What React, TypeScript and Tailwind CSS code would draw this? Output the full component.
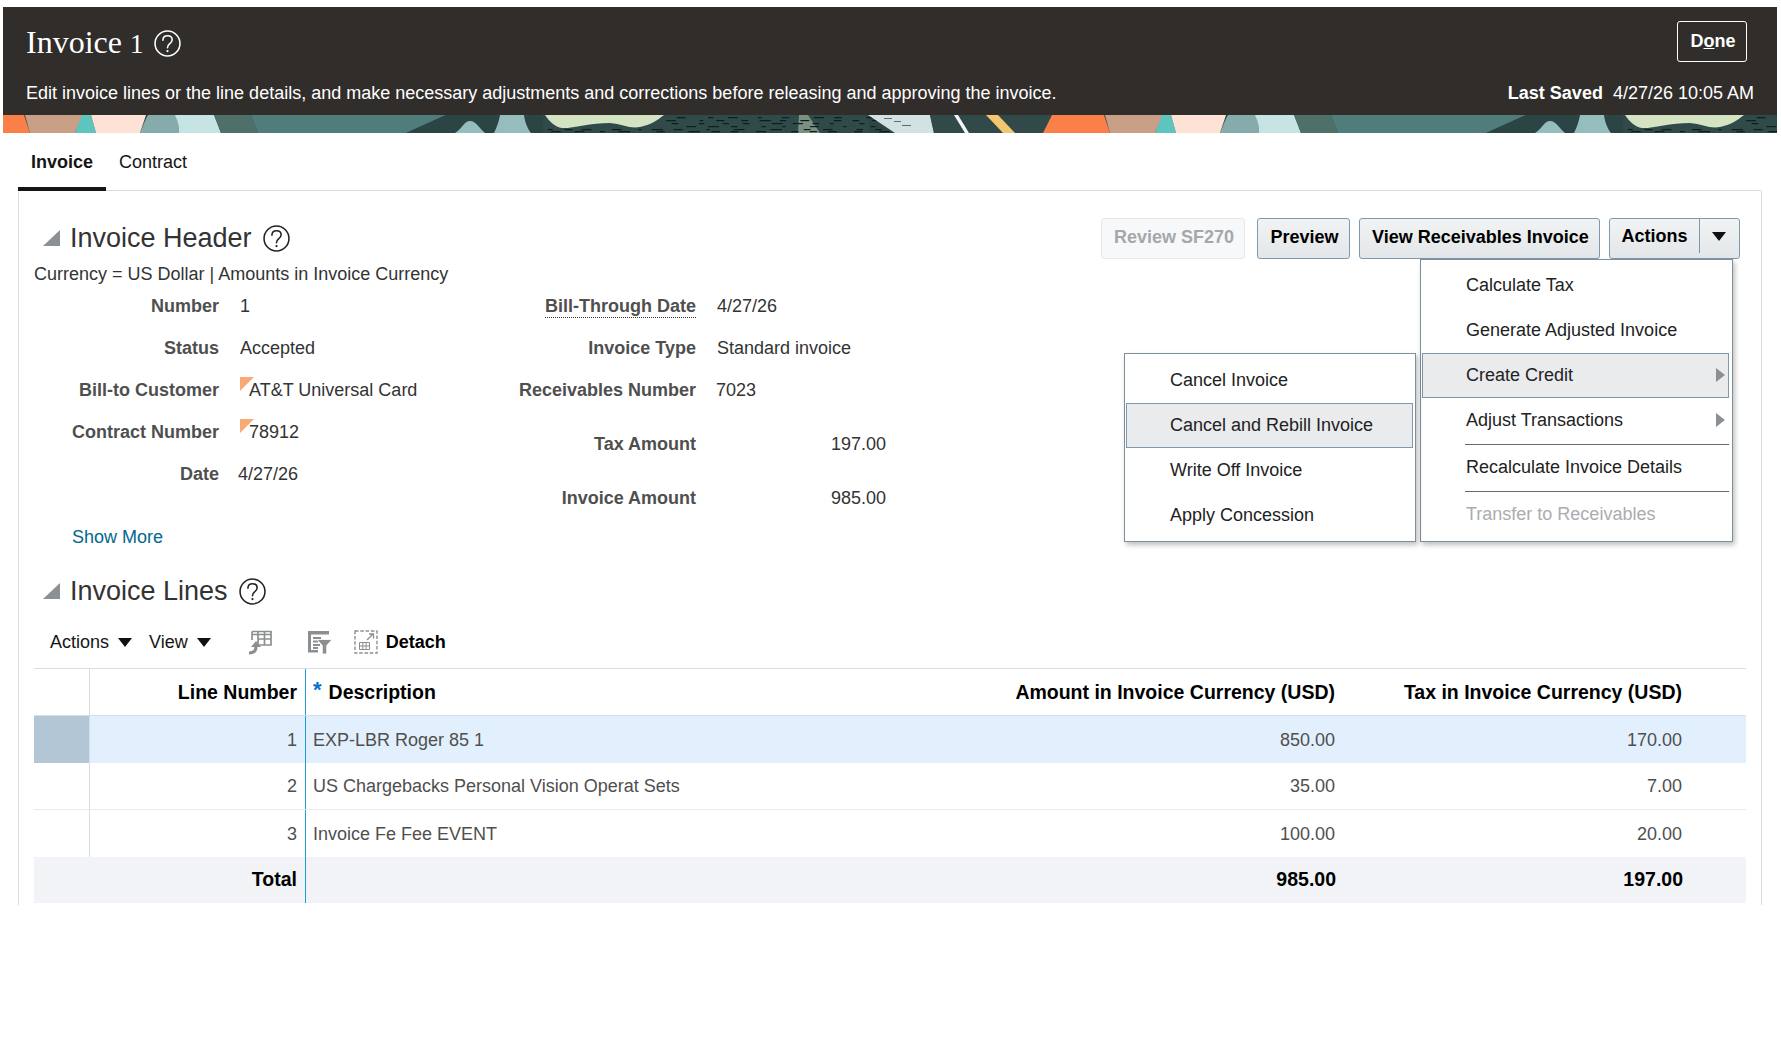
import React from "react";

const PERIOD = 1080;

function dashes() {
  const out: { x: number; y: number; w: number }[] = [];
  let s = 7;
  const rnd = () => {
    s = (s * 16807) % 2147483647;
    return s / 2147483647;
  };
  [2, 5, 8, 11, 14, 16].forEach((y) => {
    let x = 545 + rnd() * 10;
    while (x < 925) {
      const w = 3 + rnd() * 9;
      const minY = x < 665 ? 12 : 0;
      if (y >= minY) out.push({ x, y, w });
      x += w + 8 + rnd() * 18;
    }
  });
  return out;
}

function BannerTile({ x, marks }: { x: number; marks: { x: number; y: number; w: number }[] }) {
  return (
    <g transform={`translate(${x} 0)`}>
      <polygon points="-28,0 24,0 30,18 -37,18" fill="#fb7f48" />
      <polygon points="25,0 83,0 75,18 30,18" fill="#c99f86" />
      <polygon points="82,0 91,0 96,18 75,18" fill="#5ec4be" />
      <polygon points="91,0 146,0 140,18 96,18" fill="#fee2d6" />
      <path d="M140 18 C144 8 146 3 148 0 L176 0 C178 6 179 12 179 18 Z" fill="#85acab" />
      <path d="M179 18 C179 12 178 6 175 0 L214 0 L221 18 Z" fill="#c7e4e5" />
      <polygon points="214,0 251,0 258,18 221,18" fill="#4f7069" />
      <polygon points="251,0 446,0 406,18 258,18" fill="#507d7c" />
      <polygon points="446,0 545,0 545,18 406,18" fill="#2b4544" />
      <path d="M455 18 C462 14 464 6 470 6 C476 6 480 14 485 18 Z" fill="#95bdbd" />
      <path d="M500 0 L524 0 C525 8 528 14 531 18 L494 18 C497 12 499 6 500 0 Z" fill="#95bdbd" />
      <rect x="543" y="0" width="326" height="18" fill="#2f4a48" />
      <path d="M545 0 L664 0 C658 5 650 10 640 12 C630 14 622 9 610 8 C590 8 570 14 562 13 C555 12 549 6 545 0 Z" fill="#d4e3c2" />
      <polygon points="799,0 808,0 820,18 798,18" fill="#7c9081" />
      {marks.map((m, i) => (
        <rect key={i} x={m.x} y={m.y} width={m.w} height="1.2" fill="#0f1d1c" />
      ))}
      <polygon points="868,0 930,0 934,18 895,18" fill="#d2e2e3" />
      <rect x="884" y="3" width="8" height="1" fill="#5a6e6e" />
      <rect x="894" y="6" width="7" height="1" fill="#5a6e6e" />
      <rect x="902" y="10" width="9" height="1" fill="#5a6e6e" />
      <polygon points="930,0 1052,0 1043,18 934,18" fill="#314a49" />
      <polygon points="954,0 958,0 969,18 965,18" fill="#f4f7f6" />
      <polygon points="986,0 998,0 1015,18 1003,18" fill="#f3c770" />
    </g>
  );
}

function Banner() {
  const marks = dashes();
  return (
    <svg className="block h-[18px] w-full" viewBox="0 0 1774 18" preserveAspectRatio="none">
      <rect x="0" y="0" width="1774" height="18" fill="#2b4544" />
      <BannerTile x={-3} marks={marks} />
      <BannerTile x={PERIOD - 3} marks={marks} />
    </svg>
  );
}

function HelpIcon({ size, color, className }: { size: number; color: string; className?: string }) {
  return (
    <svg width={size} height={size} viewBox="0 0 26 26" fill="none" className={className}>
      <circle cx="13" cy="13" r="12" stroke={color} strokeWidth="1.5" />
      <path d="M8.600 9.800 C8.600 7 10.500 5.500 13 5.500 C15.700 5.500 17.500 7.200 17.500 9.500 C17.500 11.500 16.300 12.400 15 13.400 C13.700 14.400 13 15.200 13 17" stroke={color} strokeWidth="1.5" strokeLinecap="round" />
      <circle cx="13" cy="20.300" r="1.100" fill={color} />
    </svg>
  );
}

function SectionTitle({ title }: { title: string }) {
  return (
    <div className="flex h-[40px] items-center">
      <span className="ml-[9px] h-0 w-0 border-b-[16px] border-l-[17px] border-b-[#8b9094] border-l-transparent" />
      <h2 className="ml-[10px] text-[27px] font-normal text-[#333333]">{title}</h2>
      <HelpIcon size={27} color="#222222" className="ml-[11px]" />
    </div>
  );
}

function Flag() {
  return (
    <span className="absolute left-0 top-[-1px] h-0 w-0 border-r-[14px] border-t-[14px] border-r-transparent border-t-[#fba974]" />
  );
}

function Col1Row({ label, children }: { label: string; children: React.ReactNode }) {
  return (
    <div className="flex h-[42px] items-center">
      <div className="w-[185px] text-right font-bold text-[#4f4f4f]">{label}</div>
      <div className="ml-[21px] text-[#333333]">{children}</div>
    </div>
  );
}

function Col2Row({ label, right, h, dotted, children }: { label: string; right?: boolean; h: string; dotted?: boolean; children: React.ReactNode }) {
  return (
    <div className={`flex items-center ${h}`}>
      <div className="w-[246px] text-right font-bold text-[#4f4f4f]">
        <span className={dotted ? "border-b border-dotted border-[#333333] pb-[1px]" : ""}>{label}</span>
      </div>
      <div className={`ml-[21px] w-[169px] text-[#333333] ${right ? "text-right" : ""}`}>{children}</div>
    </div>
  );
}

function Btn({ children, wide, disabled }: { children: React.ReactNode; wide: string; disabled?: boolean }) {
  return (
    <button
      className={
        disabled
          ? `h-[41px] rounded-[3px] border border-[#e4e8ea] bg-[#f7f8f9] pb-[4px] pl-[2px] text-center font-bold text-[#a4a8ab] ${wide}`
          : `h-[41px] rounded-[3px] border border-[#7e98ad] bg-gradient-to-b from-[#f1f3f3] to-[#e3e7e9] pb-[4px] pl-[2px] text-center font-bold text-black ${wide}`
      }
    >
      {children}
    </button>
  );
}

function MenuItem({ label, h, active, arrow, muted }: { label: string; h: string; active?: boolean; arrow?: boolean; muted?: boolean }) {
  return (
    <div
      className={`relative flex items-center pl-[43px] ${h} ${active ? "border border-[#7e98ad] bg-[#e9ebed]" : "border border-transparent"} ${muted ? "text-[#a9adb0]" : "text-[#222222]"}`}
    >
      {label}
      {arrow && (
        <span className="absolute right-[3px] h-0 w-0 border-y-[7px] border-l-[9px] border-y-transparent border-l-[#8b9094]" />
      )}
    </div>
  );
}

function Caret() {
  return <span className="h-0 w-0 border-x-[7px] border-t-[9px] border-x-transparent border-t-[#111111]" />;
}

function FreezeIcon() {
  return (
    <svg width="24" height="25" viewBox="0 0 24 25" fill="none">
      <path d="M4 1.500H23V15H10M4 1.500V10M4 4.500H23M10 9H23M10 1.500V15M16.500 1.500V15" stroke="#8c8f91" strokeWidth="1.7" />
      <path d="M1 23C6 23 8 21 8 16" stroke="#8c8f91" strokeWidth="3.200" />
      <path d="M3 17L8 11L13 17Z" fill="#8c8f91" />
    </svg>
  );
}

function FilterIcon() {
  return (
    <svg width="25" height="25" viewBox="0 0 25 25" fill="none">
      <path d="M1 1h21v3.500H1zM1 4.500h3V22H1zM1 20h10v2.500H1z" fill="#8c8f91" />
      <path d="M6 8h8M6 11.500h5M6 15h7M6 18h5" stroke="#8c8f91" strokeWidth="2" />
      <path d="M10 9.500h15l-5.300 6v8.500h-4.400v-8.500z" fill="#8c8f91" stroke="#ffffff" strokeWidth="0.800" />
    </svg>
  );
}

function DetachIcon() {
  return (
    <svg width="24" height="24" viewBox="0 0 24 24" fill="none">
      <rect x="1" y="1" width="22" height="22" stroke="#8c8f91" strokeWidth="1.400" strokeDasharray="3.500 1.800" />
      <path d="M5.500 12.500h10v7h-10zM5.500 16h10M8.800 12.500v7M12.100 12.500v7" stroke="#8c8f91" strokeWidth="1" />
      <path d="M13 10l6-6M15 4h4.500v4.500" stroke="#8c8f91" strokeWidth="1.300" />
    </svg>
  );
}

const gridCols = "grid grid-cols-[56px_216px_699px_346px_347px_48px]";

type Row = { n: string; d: string; a: string; t: string };
const rows: Row[] = [
  { n: "1", d: "EXP-LBR Roger 85 1", a: "850.00", t: "170.00" },
  { n: "2", d: "US Chargebacks Personal Vision Operat Sets", a: "35.00", t: "7.00" },
  { n: "3", d: "Invoice Fe Fee EVENT", a: "100.00", t: "20.00" },
];

export default function App() {
  return (
    <div className="min-h-[1064px] w-full bg-white pl-[3px] pr-[4px] pt-[7px] font-['Liberation_Sans',Arial,sans-serif] text-[18px] leading-[24px] text-[#333333]">
      <header className="bg-[#312d2a] text-white">
        <div className="h-[108px] pl-[23px] pr-[23px]">
          <div className="flex h-[71px] items-start justify-between">
            <div className="flex h-[72px] items-center">
              <h1 className="font-['Liberation_Serif',serif] text-[32px] font-normal">
                Invoice <span className="text-[27px]">1</span>
              </h1>
              <HelpIcon size={27} color="#ffffff" className="ml-[11px]" />
            </div>
            <button className="mr-[7px] mt-[14px] h-[41px] w-[70px] rounded-[3px] border border-white pb-[1px] pl-[2px] text-center font-bold text-white">
              D<span className="underline">o</span>ne
            </button>
          </div>
          <div className="flex h-[30px] items-center justify-between">
            <div>Edit invoice lines or the line details, and make necessary adjustments and corrections before releasing and approving the invoice.</div>
            <div>
              <span className="font-bold">Last Saved</span>
              <span className="ml-[10px]">4/27/26 10:05 AM</span>
            </div>
          </div>
        </div>
        <Banner />
      </header>

      <div className="ml-[15px] flex h-[58px] items-start">
        <div className="relative z-10 h-[58px] w-[88px] border-b-4 border-[#161513] pl-[13px] pt-[17px] font-bold text-[#161513]">Invoice</div>
        <div className="pl-[13px] pt-[17px] text-[#161513]">Contract</div>
      </div>

      <section className="relative ml-[15px] mr-[15px] -mt-[1px] h-[715px] rounded-t-[2px] border-x border-t border-[#d6dfe6] pl-[15px] pr-[15px] pt-[27px]">
        <div className="flex items-start justify-between">
          <SectionTitle title="Invoice Header" />
          <div className="mr-[6px] flex gap-[9px]">
            <span className="mr-[3px] flex">
              <Btn wide="w-[144px]" disabled>Review SF270</Btn>
            </span>
            <Btn wide="w-[93px]">Preview</Btn>
            <Btn wide="w-[241px]">View Receivables Invoice</Btn>
            <div className="flex h-[41px] w-[131px] rounded-[3px] border border-[#7e98ad] bg-gradient-to-b from-[#f1f3f3] to-[#e3e7e9] font-bold text-black">
              <div className="mb-[5px] flex w-[90px] items-center justify-center border-r border-[#7e98ad]">Actions</div>
              <div className="flex flex-1 items-center justify-center pb-[4px] pr-[2px]">
                <Caret />
              </div>
            </div>
          </div>
        </div>

        <div className="mt-[3px] h-[24px]">Currency = US Dollar | Amounts in Invoice Currency</div>

        <div className="-mt-[1px] flex">
          <div className="w-[416px]">
            <Col1Row label="Number">1</Col1Row>
            <Col1Row label="Status">Accepted</Col1Row>
            <Col1Row label="Bill-to Customer">
              <span className="relative block pl-[9px]"><Flag />AT&amp;T Universal Card</span>
            </Col1Row>
            <Col1Row label="Contract Number">
              <span className="relative block pl-[9px]"><Flag />78912</span>
            </Col1Row>
            <Col1Row label="Date">
              <span className="-ml-[2px] block">4/27/26</span>
            </Col1Row>
            <a className="ml-[38px] mt-[30px] block h-[24px] text-[#00688c]">Show More</a>
          </div>
          <div>
            <Col2Row label="Bill-Through Date" h="h-[42px]" dotted>4/27/26</Col2Row>
            <Col2Row label="Invoice Type" h="h-[42px]">Standard invoice</Col2Row>
            <Col2Row label="Receivables Number" h="h-[42px]"><span className="-ml-[1px] block">7023</span></Col2Row>
            <div className="h-[6px]" />
            <Col2Row label="Tax Amount" h="h-[54px]" right>197.00</Col2Row>
            <Col2Row label="Invoice Amount" h="h-[54px]" right>985.00</Col2Row>
          </div>
        </div>

        <div className="mt-[22px]">
          <SectionTitle title="Invoice Lines" />
        </div>

        <div className="mt-[11px] flex h-[40px] items-center pl-[16px] text-[#161513]">
          <span>Actions</span>
          <span className="ml-[9px] flex"><Caret /></span>
          <span className="ml-[17px]">View</span>
          <span className="ml-[9px] flex"><Caret /></span>
          <span className="ml-[37px] flex"><FreezeIcon /></span>
          <span className="ml-[35px] flex"><FilterIcon /></span>
          <span className="ml-[22px] flex"><DetachIcon /></span>
          <span className="ml-[8px] font-bold text-black">Detach</span>
        </div>

        <div className="mt-[6px] border-t border-[#d6dfe6] text-[#4f4f4f]">
          <div className={`${gridCols} h-[47px] border-b border-[#d6dfe6] text-[19.5px] font-bold text-black`}>
            <div className="border-r border-[#d6dfe6]" />
            <div className="flex items-center justify-end border-r border-[#1a9fd0] pr-[8px]">Line Number</div>
            <div className="flex items-center pl-[7px]">
              <span className="mb-[5px] mr-[7px] text-[22px] font-bold text-[#0572ce]">*</span>
              Description
            </div>
            <div className="flex items-center justify-end pr-[16px]">Amount in Invoice Currency (USD)</div>
            <div className="flex items-center justify-end pr-[16px]">Tax in Invoice Currency (USD)</div>
            <div />
          </div>
          {rows.map((r, i) => (
            <div key={r.n} className={`${gridCols} h-[47px] ${i === 0 ? "bg-[#e2f0fd]" : i === 1 ? "border-b border-[#e8ebee]" : ""}`}>
              <div className={i === 0 ? "border-r border-[#d6dfe6] bg-[#b3c6d5]" : "border-r border-[#d6dfe6]"} />
              <div className="flex items-center justify-end border-r border-[#1a9fd0] pr-[8px]">{r.n}</div>
              <div className="flex items-center pl-[7px]">{r.d}</div>
              <div className="flex items-center justify-end pr-[16px]">{r.a}</div>
              <div className="flex items-center justify-end pr-[16px]">{r.t}</div>
              <div />
            </div>
          ))}
          <div className={`${gridCols} h-[46px] bg-[#f1f3f7] pb-[2px] text-[19.5px] font-bold text-black`}>
            <div />
            <div className="-mb-[2px] flex items-center justify-end border-r border-[#1a9fd0] pb-[2px] pr-[8px]">Total</div>
            <div />
            <div className="flex items-center justify-end pr-[15px]">985.00</div>
            <div className="flex items-center justify-end pr-[15px]">197.00</div>
            <div />
          </div>
        </div>

        <div className="absolute left-[1401px] top-[68px] z-20 h-[283px] w-[313px] border border-[#7e8f9c] bg-white pl-[1px] pr-[3px] pt-[3px] shadow-[2px_3px_5px_rgba(0,0,0,0.25)]">
          <MenuItem label="Calculate Tax" h="h-[44px]" />
          <MenuItem label="Generate Adjusted Invoice" h="h-[46px]" />
          <MenuItem label="Create Credit" h="h-[45px] pb-[2px]" active arrow />
          <MenuItem label="Adjust Transactions" h="h-[46px] pb-[2px]" arrow />
          <div className="ml-[43px] border-t border-[#5f6d78]" />
          <MenuItem label="Recalculate Invoice Details" h="h-[46px] pb-[2px]" />
          <div className="ml-[43px] border-t border-[#5f6d78]" />
          <MenuItem label="Transfer to Receivables" h="h-[46px] pb-[2px]" muted />
        </div>

        <div className="absolute left-[1105px] top-[162px] z-20 h-[189px] w-[292px] border border-[#7e8f9c] bg-white pl-[1px] pr-[2px] pt-[3px] shadow-[2px_3px_5px_rgba(0,0,0,0.25)]">
          <MenuItem label="Cancel Invoice" h="h-[46px]" />
          <MenuItem label="Cancel and Rebill Invoice" h="h-[45px] pb-[2px]" active />
          <MenuItem label="Write Off Invoice" h="h-[43px]" />
          <MenuItem label="Apply Concession" h="h-[47px]" />
        </div>
      </section>
    </div>
  );
}
